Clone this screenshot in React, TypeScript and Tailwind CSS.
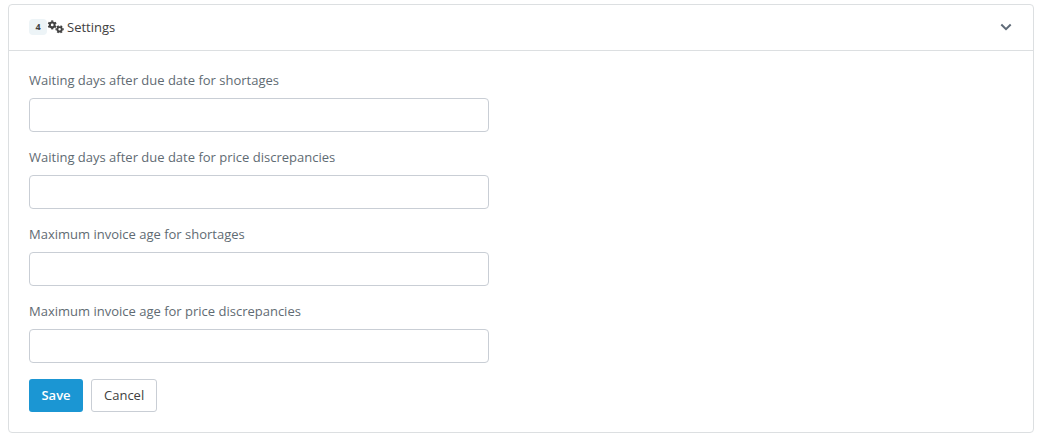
import { useState } from 'react';
import type { FormEvent } from 'react';

const fields = [
  { id: 'shortage-wait', label: 'Waiting days after due date for shortages' },
  { id: 'price-wait', label: 'Waiting days after due date for price discrepancies' },
  { id: 'shortage-age', label: 'Maximum invoice age for shortages' },
  { id: 'price-age', label: 'Maximum invoice age for price discrepancies' },
];

const teeth = [0, 60, 120, 180, 240, 300];

function GearsIcon() {
  return (
    <svg viewBox="0 0 17 14" width="17" height="14" fill="none" stroke="currentColor" aria-hidden="true">
      <g transform="translate(5.2 4.9)">
        <circle r="2.4" strokeWidth="2" />
        {teeth.map((angle) => (
          <path key={angle} d="M0-3.1V-4.5" strokeWidth="2.1" transform={`rotate(${angle})`} />
        ))}
      </g>
      <g transform="translate(12.6 9.3)">
        <circle r="2.2" strokeWidth="1.9" />
        {teeth.map((angle) => (
          <path key={angle} d="M0-2.8V-4.1" strokeWidth="2" transform={`rotate(${angle + 30})`} />
        ))}
      </g>
    </svg>
  );
}

function ChevronIcon() {
  return (
    <svg viewBox="0 0 12 8" width="12" height="8" fill="none" stroke="currentColor" strokeWidth="2" aria-hidden="true">
      <path d="M1.3 1.5L6 6.2L10.7 1.5" />
    </svg>
  );
}

export default function App() {
  const [open, setOpen] = useState(true);
  const [values, setValues] = useState<Record<string, string>>({});

  const handleSubmit = (e: FormEvent) => {
    e.preventDefault();
  };

  return (
    <main className="bg-white px-2 py-1 font-['Open_Sans',sans-serif] text-[13px] leading-[18px]">
      <section className="rounded border border-[#dcdfe1]">
        <button
          type="button"
          aria-expanded={open}
          onClick={() => setOpen(!open)}
          className="flex h-[45px] w-full items-center pr-[21px] pb-px pl-5 text-[#414141]"
        >
          <span className="flex h-4 w-[18px] items-center justify-center rounded bg-[#edf4f7] text-[9px] font-bold">4</span>
          <GearsIcon />
          <span className="ml-[3px]">Settings</span>
          <span className="ml-auto text-[#5f6b78]">
            <ChevronIcon />
          </span>
        </button>

        {open && (
          <form onSubmit={handleSubmit} className="border-t border-[#dcdfe1] p-5">
            {fields.map((field) => (
              <div key={field.id} className="mb-4 w-[460px] max-w-full">
                <label htmlFor={field.id} className="mb-[9px] block text-[#5f6b73]">
                  {field.label}
                </label>
                <input
                  id={field.id}
                  type="text"
                  value={values[field.id] ?? ''}
                  onChange={(e) => setValues({ ...values, [field.id]: e.target.value })}
                  className="block h-[34px] w-full rounded border border-[#c9ced5] bg-white px-3 outline-none focus:border-[#1b96d3]"
                />
              </div>
            ))}
            <div className="flex gap-2">
              <button type="submit" className="h-[33px] min-w-[54px] rounded-[3px] bg-[#1b96d3] px-3 pb-px font-semibold text-white">
                Save
              </button>
              <button
                type="button"
                onClick={() => setValues({})}
                className="h-[33px] rounded-[3px] border border-[#c9ced5] bg-white px-3 pb-px text-[#414141]"
              >
                Cancel
              </button>
            </div>
          </form>
        )}
      </section>
    </main>
  );
}
